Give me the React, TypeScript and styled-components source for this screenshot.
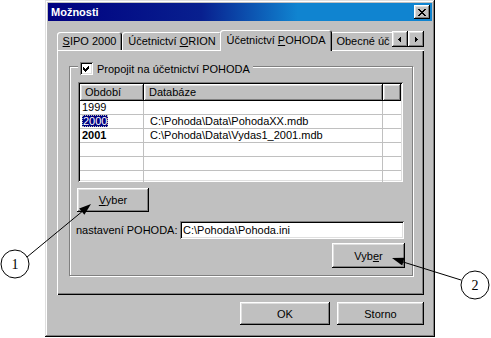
import React from 'react'
import styled, { createGlobalStyle, css } from 'styled-components'

const GlobalStyle = createGlobalStyle`
	html, body {
		margin: 0;
		padding: 0;
		background: #fff;
	}
	body {
		font-family: "Liberation Sans", Arial, sans-serif;
		font-size: 11px;
		color: #000;
	}
`

const raised = css`
	box-shadow: inset -1px -1px #000, inset 1px 1px #fff, inset -2px -2px #808080, inset 2px 2px #dfdfdf;
`

const sunken = css`
	box-shadow: inset 1px 1px #808080, inset -1px -1px #fff, inset 2px 2px #000, inset -2px -2px #dfdfdf;
`

const Stage = styled.div`
	position: relative;
	width: 491px;
	height: 338px;
	overflow: hidden;
`

const Window = styled.div`
	margin-left: 45px;
	width: 390px;
	height: 337px;
	box-sizing: border-box;
	padding: 3px;
	background: #c0c0c0;
	box-shadow: inset -1px -1px #000, inset 1px 1px #dfdfdf, inset -2px -2px #808080, inset 2px 2px #fff;
	display: flex;
	flex-direction: column;
`

const TitleBar = styled.div`
	height: 18px;
	display: flex;
	align-items: center;
	justify-content: space-between;
	padding: 0 2px 0 3px;
	background: linear-gradient(to right, #000080 0%, #08208f 40%, #1084d0 65%, #1084d0 100%);
	color: #fff;
	font-weight: bold;
	font-size: 11px;
`

const CloseButton = styled.div`
	width: 16px;
	height: 14px;
	background: #c0c0c0;
	${raised};
	display: flex;
	align-items: center;
	justify-content: center;
`

const Body = styled.div`
	display: flex;
	flex-direction: column;
	padding: 9px 8px 0 9px;
`

const TabStrip = styled.div`
	display: flex;
	height: 20px;
	position: relative;
	z-index: 1;
`

const TabList = styled.div`
	display: flex;
	align-items: flex-end;
	width: 335px;
	height: 21px;
	overflow: hidden;
`

const Tab = styled.div<{ $w: number; $active?: boolean }>`
	flex: none;
	width: ${p => p.$w}px;
	height: 18px;
	margin-bottom: 1px;
	box-sizing: border-box;
	display: flex;
	align-items: center;
	justify-content: center;
	white-space: nowrap;
	background: #c0c0c0;
	border-radius: 3px 3px 0 0;
	box-shadow: inset 1px 1px #fff, inset -1px 0 #000, inset -2px 0 #808080;
	${p => p.$active && css`
		height: 21px;
		margin: 0 -2px;
		width: ${p.$w + 4}px;
		padding-bottom: 2px;
		position: relative;
		z-index: 2;
	`}
`

const Accel = styled.span`
	text-decoration: underline;
	text-underline-offset: 1px;
`

const ArrowPair = styled.div`
	display: flex;
	margin-top: 1px;
	height: 16px;
`

const ArrowButton = styled.div`
	width: 16px;
	height: 16px;
	background: #c0c0c0;
	${raised};
	display: flex;
	align-items: center;
	justify-content: center;
`

const Panel = styled.div`
	height: 245px;
	box-sizing: border-box;
	padding: 16px 11px 0 12px;
	background: #c0c0c0;
	box-shadow: inset 1px 1px #fff, inset -1px -1px #000, inset -2px -2px #808080;
`

const Group = styled.div`
	position: relative;
	height: 210px;
	box-sizing: border-box;
	border: 1px solid #808080;
	box-shadow: inset 1px 1px #fff, 1px 1px #fff;
	padding: 15px 9px 0 8px;
	display: flex;
	flex-direction: column;
`

const Legend = styled.div`
	position: absolute;
	top: -5px;
	left: 8px;
	padding: 0 3px 0 2px;
	height: 13px;
	display: flex;
	align-items: center;
	gap: 4px;
	background: #c0c0c0;
`

const CheckBox = styled.div`
	width: 13px;
	height: 13px;
	background: #fff;
	${sunken};
	display: flex;
	align-items: center;
	justify-content: center;
`

const ListView = styled.div`
	height: 100px;
	box-sizing: border-box;
	padding: 2px;
	background: #fff;
	${sunken};
	overflow: hidden;
`

const columns = '64px 239px 1fr'

const HeaderRow = styled.div`
	display: grid;
	grid-template-columns: ${columns};
	height: 17px;
`

const HeaderCell = styled.div`
	background: #c0c0c0;
	${raised};
	padding-left: 5px;
	line-height: 16px;
	white-space: nowrap;
`

const Row = styled.div`
	display: grid;
	grid-template-columns: ${columns};
	height: 14px;
	box-sizing: border-box;
	border-bottom: 1px solid #c0c0c0;
`

const Cell = styled.div<{ $pad: number; $bold?: boolean }>`
	padding-left: ${p => p.$pad}px;
	border-right: 1px solid #c0c0c0;
	line-height: 13px;
	white-space: nowrap;
	overflow: hidden;
	font-weight: ${p => (p.$bold ? 'bold' : 'normal')};
	&:last-child {
		border-right: none;
	}
`

const Selected = styled.span`
	display: inline-block;
	background: #000080;
	color: #fff;
	padding: 0 1px;
	outline: 1px dotted #c0c0c0;
	outline-offset: -1px;
	line-height: 12px;
`

const Button = styled.div<{ $w: number; $h: number }>`
	width: ${p => p.$w}px;
	height: ${p => p.$h}px;
	flex: none;
	box-sizing: border-box;
	background: #c0c0c0;
	${raised};
	display: flex;
	align-items: center;
	justify-content: center;
`

const FirstPick = styled(Button)`
	margin-top: 6px;
	margin-left: -1px;
`

const SecondPick = styled(Button)`
	margin-top: 4px;
	margin-right: -2px;
	align-self: flex-end;
`

const FieldRow = styled.div`
	margin: 9px -1px 0 -2px;
	display: flex;
	align-items: center;
	justify-content: space-between;
`

const TextInput = styled.div`
	width: 224px;
	height: 18px;
	box-sizing: border-box;
	padding: 0 3px;
	background: #fff;
	${sunken};
	line-height: 18px;
	white-space: nowrap;
`

const Footer = styled.div`
	display: flex;
	justify-content: flex-end;
	gap: 7px;
	margin-top: 7px;
`

const Callouts = styled.svg`
	position: absolute;
	left: 0;
	top: 0;
	pointer-events: none;
`

const rows = [
	{ year: '1999', db: '' },
	{ year: '2000', db: 'C:\\Pohoda\\Data\\PohodaXX.mdb', selected: true },
	{ year: '2001', db: 'C:\\Pohoda\\Data\\Vydas1_2001.mdb', bold: true },
	{ year: '', db: '' },
	{ year: '', db: '' },
	{ year: '', db: '' },
]

export default function App() {
	return (
		<>
			<GlobalStyle />
			<Stage>
				<Window>
					<TitleBar>
						<span>Možnosti</span>
						<CloseButton>
							<svg width="8" height="7" viewBox="0 0 8 7" shapeRendering="crispEdges">
								<path d="M0 0h2v1h1v1h2v-1h1v-1h2v1h-1v1h-1v1h-1v1h1v1h1v1h1v1h-2v-1h-1v-1h-2v1h-1v1h-2v-1h1v-1h1v-1h1v-1h-1v-1h-1v-1h-1z" fill="#000" />
							</svg>
						</CloseButton>
					</TitleBar>
					<Body>
						<TabStrip>
							<TabList>
								<Tab $w={65}><span><Accel>S</Accel>IPO 2000</span></Tab>
								<Tab $w={100}><span>Účetnictví <Accel>O</Accel>RION</span></Tab>
								<Tab $w={108} $active><span>Účetnictví <Accel>P</Accel>OHODA</span></Tab>
								<Tab $w={66}><span>Obecné úč</span></Tab>
							</TabList>
							<ArrowPair>
								<ArrowButton>
									<svg width="4" height="7" viewBox="0 0 4 7" shapeRendering="crispEdges"><path d="M3 0v7L0 3.5z" fill="#000" /></svg>
								</ArrowButton>
								<ArrowButton>
									<svg width="4" height="7" viewBox="0 0 4 7" shapeRendering="crispEdges"><path d="M1 0v7L4 3.5z" fill="#000" /></svg>
								</ArrowButton>
							</ArrowPair>
						</TabStrip>
						<Panel>
							<Group>
								<Legend>
									<CheckBox>
										<svg width="7" height="7" viewBox="0 0 7 7" shapeRendering="crispEdges">
											<path d="M6 0v3l-4 4l-2 -2v-3l2 2z" fill="#000" />
										</svg>
									</CheckBox>
									<span>Propojit na účetnictví POHODA</span>
								</Legend>
								<ListView>
									<HeaderRow>
										<HeaderCell>Období</HeaderCell>
										<HeaderCell>Databáze</HeaderCell>
										<HeaderCell />
									</HeaderRow>
									{rows.map((row, index) => (
										<Row key={index}>
											<Cell $pad={2} $bold={row.bold}>
												{row.selected ? <Selected>{row.year}</Selected> : row.year}
											</Cell>
											<Cell $pad={6}>{row.db}</Cell>
											<Cell $pad={0} />
										</Row>
									))}
								</ListView>
								<FirstPick $w={72} $h={24}><span><Accel>V</Accel>yber</span></FirstPick>
								<FieldRow>
									<span>nastavení POHODA:</span>
									<TextInput>C:\Pohoda\Pohoda.ini</TextInput>
								</FieldRow>
								<SecondPick $w={73} $h={25}><span>Vyb<Accel>e</Accel>r</span></SecondPick>
							</Group>
						</Panel>
						<Footer>
							<Button $w={90} $h={23}>OK</Button>
							<Button $w={87} $h={23}>Storno</Button>
						</Footer>
					</Body>
				</Window>
				<Callouts width="491" height="338" viewBox="0 0 491 338">
					<line x1="27" y1="257" x2="84" y2="210" stroke="#000" strokeWidth="1" />
					<polygon points="91,204 84.4,214.8 79.2,208.6" fill="#000" />
					<circle cx="15" cy="264" r="14" fill="#fff" stroke="#000" strokeWidth="1" />
					<text x="15" y="269" textAnchor="middle" fontFamily="'Liberation Serif', serif" fontSize="14">1</text>
					<line x1="461" y1="280" x2="400" y2="261" stroke="#000" strokeWidth="1" />
					<polygon points="392,258 404.6,257.8 402.2,265.4" fill="#000" />
					<circle cx="475" cy="285" r="14" fill="#fff" stroke="#000" strokeWidth="1" />
					<text x="475" y="290" textAnchor="middle" fontFamily="'Liberation Serif', serif" fontSize="14">2</text>
				</Callouts>
			</Stage>
		</>
	)
}
